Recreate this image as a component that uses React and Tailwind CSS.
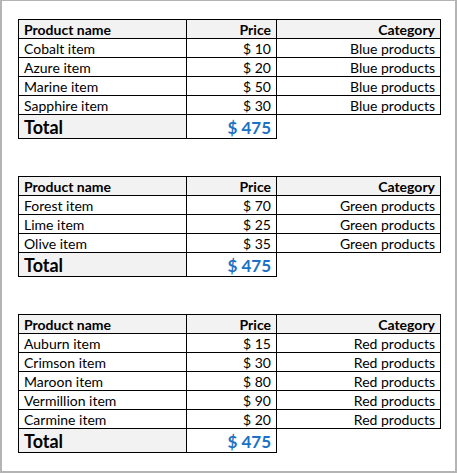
import React from "react";

const tables = [
  {
    rows: [
      ["Cobalt item", "$ 10", "Blue products"],
      ["Azure item", "$ 20", "Blue products"],
      ["Marine item", "$ 50", "Blue products"],
      ["Sapphire item", "$ 30", "Blue products"],
    ],
  },
  {
    rows: [
      ["Forest item", "$ 70", "Green products"],
      ["Lime item", "$ 25", "Green products"],
      ["Olive item", "$ 35", "Green products"],
    ],
  },
  {
    rows: [
      ["Auburn item", "$ 15", "Red products"],
      ["Crimson item", "$ 30", "Red products"],
      ["Maroon item", "$ 80", "Red products"],
      ["Vermillion item", "$ 90", "Red products"],
      ["Carmine item", "$ 20", "Red products"],
    ],
  },
];

function Table({ rows }) {
  return (
    <div className="flex flex-col w-[423px] border-l border-t border-black">
      <div className="flex h-[19px] bg-[#f2f2f2] font-bold">
        <div className="w-[168px] h-full border-r border-b border-black pl-[5px] pt-[1px] flex items-center">Product name</div>
        <div className="w-[90px] h-full border-r border-b border-black pr-[5px] pt-[1px] flex items-center justify-end">Price</div>
        <div className="w-[164px] h-full border-r border-b border-black pr-[5px] pt-[1px] flex items-center justify-end">Category</div>
      </div>
      {rows.map((r, i) => (
        <div key={i} className="flex h-[19px]">
          <div className="w-[168px] h-full border-r border-b border-black pl-[5px] pt-[1px] flex items-center">{r[0]}</div>
          <div className="w-[90px] h-full border-r border-b border-black pr-[5px] pt-[1px] flex items-center justify-end">{r[1]}</div>
          <div className="w-[164px] h-full border-r border-b border-black pr-[5px] pt-[1px] flex items-center justify-end">{r[2]}</div>
        </div>
      ))}
      <div className="flex h-[24px]">
        <div className="w-[168px] h-full border-r border-b border-black bg-[#f2f2f2] pl-[5px] pt-[1px] flex items-center font-bold text-[18px]">Total</div>
        <div className="w-[90px] h-full border-r border-b border-black pr-[5px] pt-[1px] flex items-center justify-end font-bold text-[17px] text-[#1a72c4]">$ 475</div>
      </div>
    </div>
  );
}

export default function App() {
  return (
    <div
      className="w-[457px] h-[473px] bg-white border-[#b4b4b4] border-t border-l-2 border-r-2 border-b-2 pt-[18px] pl-[16px] flex flex-col gap-[37px] text-[14px] leading-none text-black"
      style={{ fontFamily: "Lato, 'Liberation Sans', sans-serif" }}
    >
      {tables.map((t, i) => (
        <Table key={i} rows={t.rows} />
      ))}
    </div>
  );
}
